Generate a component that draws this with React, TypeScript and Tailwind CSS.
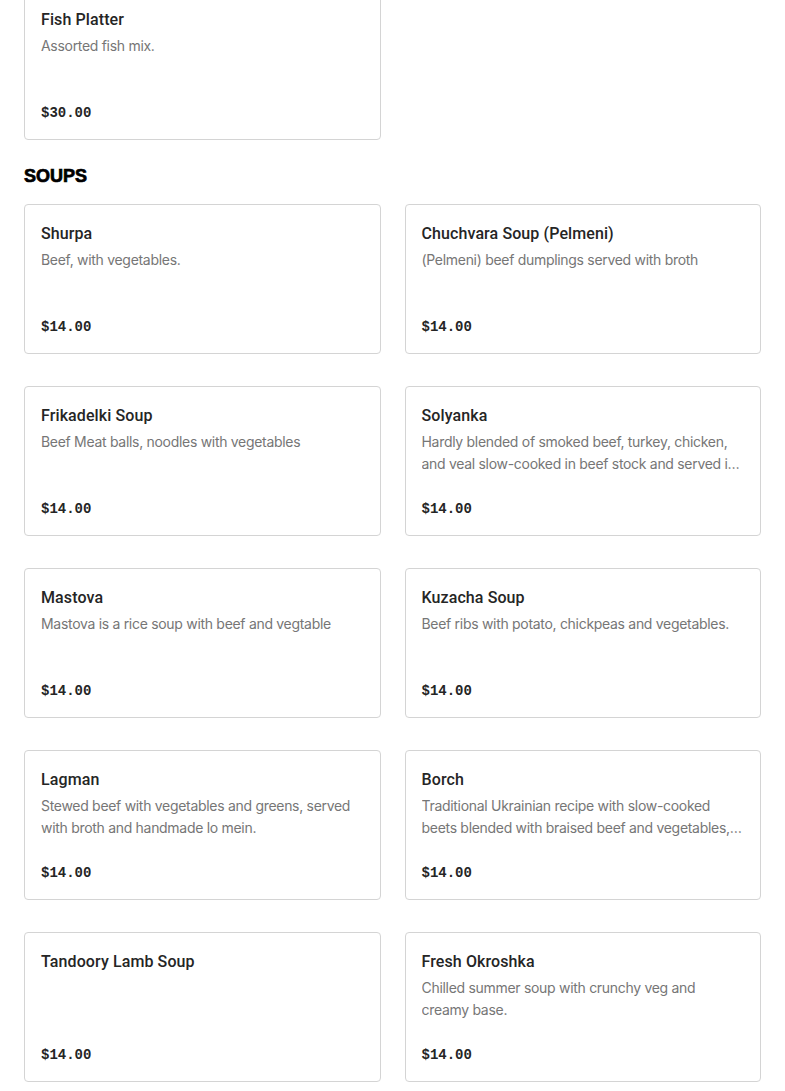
type Item = {
  name: string;
  description?: string;
  price: string;
};

const soups: Item[] = [
  { name: "Shurpa", description: "Beef, with vegetables.", price: "$14.00" },
  {
    name: "Chuchvara Soup (Pelmeni)",
    description: "(Pelmeni) beef dumplings served with broth",
    price: "$14.00",
  },
  {
    name: "Frikadelki Soup",
    description: "Beef Meat balls, noodles with vegetables",
    price: "$14.00",
  },
  {
    name: "Solyanka",
    description:
      "Hardly blended of smoked beef, turkey, chicken, and veal slow-cooked in beef stock and served in a bowl with pickles and olives.",
    price: "$14.00",
  },
  {
    name: "Mastova",
    description: "Mastova is a rice soup with beef and vegtable",
    price: "$14.00",
  },
  {
    name: "Kuzacha Soup",
    description: "Beef ribs with potato, chickpeas and vegetables.",
    price: "$14.00",
  },
  {
    name: "Lagman",
    description:
      "Stewed beef with vegetables and greens, served with broth and handmade lo mein.",
    price: "$14.00",
  },
  {
    name: "Borch",
    description:
      "Traditional Ukrainian recipe with slow-cooked beets blended with braised beef and vegetables, served with sour cream.",
    price: "$14.00",
  },
  { name: "Tandoory Lamb Soup", price: "$14.00" },
  {
    name: "Fresh Okroshka",
    description: "Chilled summer soup with crunchy veg and creamy base.",
    price: "$14.00",
  },
];

function MenuCard({ item }: { readonly item: Item }) {
  return (
    <div className="flex h-[150px] flex-col rounded border border-[#d4d4d4] bg-white px-4 pt-[17px] pb-4">
      <h3 className="font-['Roboto',sans-serif] text-[16px] leading-6 font-medium tracking-[0.1px] text-[#252525]">
        {item.name}
      </h3>
      {item.description && (
        <p className="mt-[3px] line-clamp-2 font-['Inter',sans-serif] text-[14px] leading-[22px] tracking-[-0.3px] text-[#767676]">
          {item.description}
        </p>
      )}
      <p className="mt-auto font-['Liberation_Mono',monospace] text-[14px] leading-5 font-bold text-[#252525]">
        {item.price}
      </p>
    </div>
  );
}

export default function App() {
  return (
    <div className="min-h-screen overflow-hidden bg-white font-['Liberation_Sans',Arial,sans-serif]">
      <div className="-mt-[10px] px-6 pb-10">
        <div className="grid grid-cols-2 gap-x-6">
          <MenuCard
            item={{
              name: "Fish Platter",
              description: "Assorted fish mix.",
              price: "$30.00",
            }}
          />
        </div>

        <h2 className="mt-6 mb-4 text-[18px] leading-6 font-black text-black [-webkit-text-stroke:0.7px_black]">
          SOUPS
        </h2>

        <div className="grid grid-cols-2 gap-x-6 gap-y-8">
          {soups.map((s) => (
            <MenuCard key={s.name} item={s} />
          ))}
        </div>
      </div>
    </div>
  );
}
